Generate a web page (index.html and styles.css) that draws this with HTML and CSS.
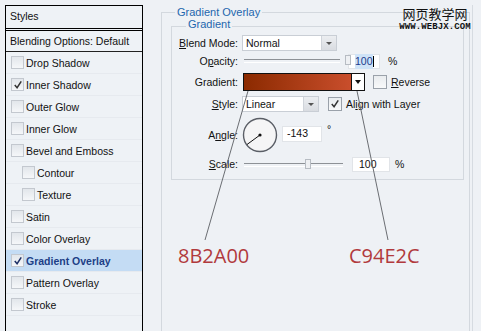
FILE: index.html
```html
<!DOCTYPE html>
<html lang="en">
<head>
    <meta charset="UTF-8">
    <meta name="viewport" content="width=device-width, initial-scale=1.0">
    <title>Layer Style - Gradient Overlay</title>
    <link rel="stylesheet" href="styles.css">
</head>
<body>
    <div class="page">
        <aside class="style-list">
            <div class="list-head">Styles</div>
            <div class="list-blend">Blending Options: Default</div>
            <div class="list-item"><span class="box"></span>Drop Shadow</div>
            <div class="list-item"><span class="box checked"><svg viewBox="0 0 13 13"><path d="M3 6.5 L5.5 9.5 L10 2.5" /></svg></span>Inner Shadow</div>
            <div class="list-item"><span class="box"></span>Outer Glow</div>
            <div class="list-item"><span class="box"></span>Inner Glow</div>
            <div class="list-item"><span class="box"></span>Bevel and Emboss</div>
            <div class="list-item sub"><span class="box"></span>Contour</div>
            <div class="list-item sub"><span class="box"></span>Texture</div>
            <div class="list-item"><span class="box"></span>Satin</div>
            <div class="list-item"><span class="box"></span>Color Overlay</div>
            <div class="list-item active"><span class="box checked"><svg viewBox="0 0 13 13"><path d="M3 6.5 L5.5 9.5 L10 2.5" /></svg></span>Gradient Overlay</div>
            <div class="list-item"><span class="box"></span>Pattern Overlay</div>
            <div class="list-item"><span class="box"></span>Stroke</div>
        </aside>

        <main class="settings">
            <fieldset class="group outer">
                <legend>Gradient Overlay</legend>
                <fieldset class="group inner">
                    <legend>Gradient</legend>

                    <div class="row r-blend">
                        <label class="lbl"><u>B</u>lend Mode:</label>
                        <div class="select blend-select"><span>Normal</span><i class="arrow"></i></div>
                    </div>

                    <div class="row r-opacity">
                        <label class="lbl">O<u>p</u>acity:</label>
                        <div class="slider opacity-slider"><span class="thumb"></span></div>
                        <div class="field opacity-field"><span class="sel">100</span><span class="caret"></span></div>
                        <span class="unit">%</span>
                    </div>

                    <div class="row r-gradient">
                        <label class="lbl">Gradient:</label>
                        <div class="gradient-pick"><span class="swatch"></span><span class="drop"></span></div>
                        <span class="box plain"></span><span class="opt"><u>R</u>everse</span>
                    </div>

                    <div class="row r-style">
                        <label class="lbl"><u>S</u>tyle:</label>
                        <div class="select style-select"><span>Linear</span><i class="arrow"></i></div>
                        <span class="box plain checked"><svg viewBox="0 0 13 13"><path d="M3 6.5 L5.5 9.5 L10 2.5" /></svg></span><span class="opt tight">Al<u>i</u>gn with Layer</span>
                    </div>

                    <div class="row r-angle">
                        <label class="lbl">A<u>n</u>gle:</label>
                        <svg class="dial" viewBox="0 0 36 36">
                            <circle cx="18" cy="18" r="16.5" class="dial-ring" />
                            <line x1="18" y1="18" x2="5" y2="27.5" class="dial-hand" />
                            <circle cx="18" cy="18" r="1.6" class="dial-dot" />
                        </svg>
                        <div class="field angle-field">-143</div>
                        <span class="deg">°</span>
                    </div>

                    <div class="row r-scale">
                        <label class="lbl"><u>S</u>cale:</label>
                        <div class="slider scale-slider"><span class="thumb"></span></div>
                        <div class="field scale-field">100</div>
                        <span class="unit">%</span>
                    </div>
                </fieldset>
            </fieldset>
        </main>

        <div class="watermark">
            <div class="wm-cn">网页教学网</div>
            <div class="wm-url">WWW.WEBJX.COM</div>
        </div>

        <svg class="callouts" viewBox="0 0 481 331">
            <line x1="248" y1="91" x2="205" y2="240" />
            <line x1="357" y1="91" x2="388" y2="240" />
            <text x="178" y="263">8B2A00</text>
            <text x="349" y="263">C94E2C</text>
        </svg>
    </div>
</body>
</html>
```

FILE: styles.css
```css
html, body {
    margin: 0;
    padding: 0;
}
body {
    font-family: "Liberation Sans", Arial, sans-serif;
    font-size: 10.5px;
    color: #111;
    background: #eef1f5;
    overflow: hidden;
}
.page {
    position: relative;
    display: flex;
    width: 481px;
    height: 331px;
    padding: 5px 0 0 5px;
    box-sizing: border-box;
}

/* left list */
.style-list {
    width: 136px;
    height: 340px;
    flex: none;
    border: 1px solid #000;
    background: #eef2f6;
}
.list-head {
    height: 22px;
    line-height: 21px;
    padding-left: 4px;
    border-bottom: 3px double #000;
}
.list-blend {
    height: 20px;
    line-height: 20px;
    padding-left: 4px;
    border-bottom: 1px solid #222;
}
.list-item {
    display: flex;
    align-items: center;
    height: 22px;
    padding-left: 5px;
    box-sizing: border-box;
    border-bottom: 1px solid #e6eaef;
}
.list-item.sub {
    padding-left: 16px;
}
.list-item.active {
    background: #c4dcf4;
    color: #1d3f86;
    font-weight: bold;
}
.box {
    display: inline-block;
    width: 11px;
    height: 11px;
    margin-right: 2px;
    border: 1px solid #c3c8cf;
    background: linear-gradient(#e2e6eb, #f5f7f9);
    position: relative;
    flex: none;
}
.box svg {
    width: 12px;
    height: 12px;
    display: block;
}
.box path {
    fill: none;
    stroke: #333;
    stroke-width: 1.6;
}
.list-item.active .box path {
    stroke: #1d2f66;
}

/* settings panel */
.settings {
    width: 329px;
    flex: none;
    border-right: 1px solid #d6dbe1;
    height: 340px;
}
.group {
    margin: 0;
    padding: 0;
    border: 1px solid #d3d8de;
    min-width: 0;
}
.group legend {
    font-size: 10.5px;
    padding: 0 2px;
}
.outer {
    margin: 1px 0 0 18px;
    width: 293px;
    height: 330px;
    padding: 0 5px 0 9px;
}
.outer > legend {
    color: #2366ad;
    line-height: 12px;
    margin-left: 4px;
    font-size: 11px;
}
.inner {
    padding: 0 0 7px 0;
}
.inner > legend {
    color: #2366ad;
    line-height: 12px;
    padding-bottom: 4px;
    margin-left: 14px;
    font-size: 11px;
}

.row {
    display: flex;
    align-items: center;
}
.r-blend { height: 18px; }
.r-opacity { height: 18px; }
.r-gradient { height: 24px; }
.r-style { height: 20px; }
.r-angle { height: 42px; }
.r-scale { height: 16px; }

.lbl {
    width: 66px;
    text-align: right;
    flex: none;
}
.select {
    display: flex;
    align-items: center;
    margin-left: 4px;
    height: 14px;
    border: 1px solid #c9ced5;
    background: #fff;
    box-sizing: content-box;
    padding-left: 3px;
}
.select span {
    flex: 1;
}
.blend-select { width: 90px; }
.style-select { width: 72px; }
.arrow {
    width: 14px;
    height: 14px;
    background: linear-gradient(#eceef1, #d9dce1);
    border-left: 1px solid #d0d4da;
    position: relative;
}
.arrow::after {
    content: "";
    position: absolute;
    left: 4px;
    top: 6px;
    border-left: 3px solid transparent;
    border-right: 3px solid transparent;
    border-top: 3px solid #555;
}

.slider {
    position: relative;
    height: 2px;
    margin-left: 6px;
    border-top: 1px solid #8d9196;
    border-bottom: 1px solid #fff;
}
.opacity-slider { width: 96px; }
.scale-slider { width: 99px; margin-top: 1px; }
.thumb {
    position: absolute;
    top: -5px;
    width: 4px;
    height: 8px;
    border: 1px solid #b7bcc3;
    background: #eef0f3;
}
.opacity-slider .thumb { left: 101px; }
.scale-slider .thumb { left: 61px; }

.field {
    height: 15px;
    line-height: 15px;
    background: #fff;
    border: 1px solid #e1e4e8;
    padding-left: 3px;
    box-sizing: border-box;
    display: flex;
    align-items: center;
}
.opacity-field {
    width: 32px;
    margin-left: 8px;
    padding-left: 6px;
}
.sel {
    background: #cfe3f7;
    color: #1b3a8c;
}
.caret {
    width: 1px;
    height: 11px;
    background: #000;
}
.unit {
    margin-left: 8px;
}
.r-scale .unit {
    margin-left: 5px;
}
.scale-field {
    width: 38px;
    margin-left: 9px;
    padding-left: 6px;
}

.gradient-pick {
    display: flex;
    margin-left: 5px;
    width: 120px;
    height: 16px;
    border: 1px solid #111;
}
.swatch {
    flex: 1;
    background: linear-gradient(90deg, #8b2a00, #c94e2c);
}
.drop {
    width: 12px;
    border-left: 1px solid #111;
    background: #fff;
    position: relative;
}
.drop::after {
    content: "";
    position: absolute;
    left: 3px;
    top: 6px;
    border-left: 3px solid transparent;
    border-right: 3px solid transparent;
    border-top: 4px solid #111;
}
.box.plain {
    margin-left: 8px;
    width: 12px;
    height: 12px;
    border-color: #9aa1aa;
    background: linear-gradient(#e9ecef, #f8f9fa);
}
.r-style .box.plain {
    margin-left: 9px;
}
.opt {
    margin-left: 2px;
}

.dial {
    width: 36px;
    height: 36px;
    margin-left: 4px;
    flex: none;
}
.dial-ring {
    fill: #f5f5f6;
    stroke: #5a5e66;
    stroke-width: 1.4;
}
.dial-hand {
    stroke: #111;
    stroke-width: 1;
}
.dial-dot {
    fill: #111;
}
.angle-field {
    width: 40px;
    margin-left: 4px;
    height: 16px;
    padding-left: 4px;
    margin-top: -3px;
}
.deg {
    margin-left: 5px;
    margin-top: -12px;
}

/* watermark over the corner */
.watermark {
    position: absolute;
    top: 6px;
    left: 398px;
    width: 74px;
    text-align: center;
}
.wm-cn {
    font-family: "Noto Sans CJK SC", sans-serif;
    font-size: 13px;
    line-height: 15px;
    color: #111;
}
.wm-url {
    font-family: "Liberation Mono", monospace;
    font-size: 9px;
    font-weight: bold;
    line-height: 10px;
    margin-top: 1px;
    letter-spacing: 0.1px;
}

/* callout lines and colour codes */
.callouts {
    position: absolute;
    left: 0;
    top: 0;
    width: 481px;
    height: 331px;
    pointer-events: none;
}
.callouts line {
    stroke: #6b6e73;
    stroke-width: 1;
}
.callouts text {
    font-family: "Open Sans", sans-serif;
    font-size: 20px;
    fill: #b13a3d;
}
```
